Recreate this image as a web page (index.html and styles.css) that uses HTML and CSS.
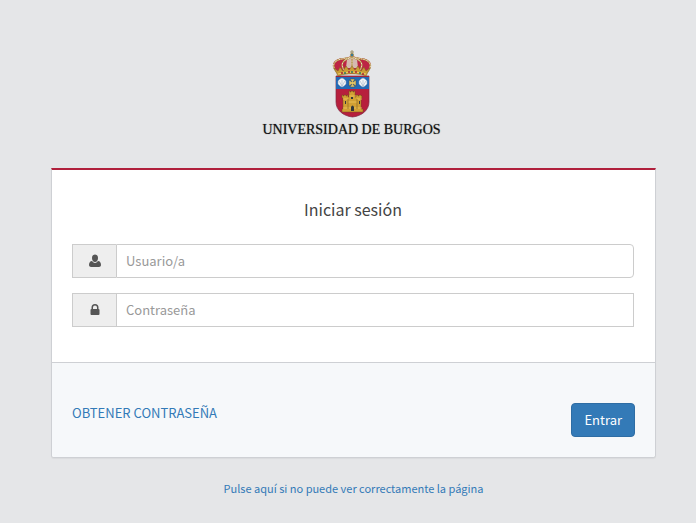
FILE: index.html
```html
<!DOCTYPE html>
<html lang="es">
<head>
<meta charset="utf-8">
<meta name="viewport" content="width=device-width, initial-scale=1">
<title>Iniciar sesión - Universidad de Burgos</title>
<link rel="stylesheet" href="styles.css">
</head>
<body>
<div class="page">
  <header class="brand">
    <svg class="crest" viewBox="0 0 40 68" aria-hidden="true">
      <!-- shield -->
      <path d="M4 26h33v26c0 8-7 14-16.500 15C11 66 4 60 4 52z" fill="#b71f3d" stroke="#7f2942" stroke-width=".7"/>
      <path d="M4 27h33v12H4z" fill="#2369b5"/>
      <!-- crown -->
      <path d="M6 24L1 17C0 11 6 8 13 8l7-2 7 2c7 0 13 3 12 9l-5 7z" fill="#bd2445"/>
      <path d="M15 9l5-2 5 2 1 9H14z" fill="#d5b9b0"/>
      <path d="M5 22C-2 15 3 10 10 9q6-1 10-2 4 1 10 2c7 1 12 6 5 13M12 20C8 14 11 10 18 8M28 20c4-6 1-10-6-12M20 8v14" fill="none" stroke="#a88436" stroke-width="1.500"/>
      <path d="M5 22C-2 15 3 10 10 9q6-1 10-2 4 1 10 2c7 1 12 6 5 13M12 20C8 14 11 10 18 8M28 20c4-6 1-10-6-12M20 8v14" fill="none" stroke="#f6ead2" stroke-width="1" stroke-dasharray="1 .6"/>
      <path d="M2 18l4 3 2-4 3 4 3-5 3 4 3-4 3 4 3-4 3 5 3-4 2 4 4-3-4 8c-9-3-19-3-28 0z" fill="#c99c35" stroke="#785923" stroke-width=".5"/>
      <path d="M6 24q14-4 28 0" fill="none" stroke="#efd06a"/>
      <path d="M9 23h2m5-1h2m5 0h2m5 2h2" stroke="#a62235" stroke-width="1.500"/>
      <path d="M12 23h2m5-1h2m6 1h2" stroke="#28745d" stroke-width="1.500"/>
      <circle cx="20" cy="5" r="1.700" fill="#387a9a" stroke="#b69242" stroke-width=".7"/>
      <path d="M20 0v4m-2-2h4" stroke="#8d8052" stroke-width=".8"/>
      <!-- shells and cross -->
      <g fill="#f2f4f6" stroke="#91a6bd" stroke-width=".5">
        <path d="M6 31l2-2 2-1 2 1 2 2v3l-2 2-2 1-2-1-2-2z"/>
        <path d="M27 31l2-2 2-1 2 1 2 2v3l-2 2-2 1-2-1-2-2z"/>
        <path d="M10 36l-3-5m3 5v-6m0 6l3-5M31 36l-3-5m3 5v-6m0 6l3-5"/>
      </g>
      <path d="M18 29h5l-2 3 3-2v6l-3-2 2 3h-5l2-3-3 2v-6l3 2z" fill="#e2c465" stroke="#354d60" stroke-width=".5"/>
      <!-- castle -->
      <path d="M10 62v-3h1V48h-1v-3h1v1h1v-1h2v1h1v-1h1v2h1v-6h1v1h1v-1h2v1h1v-1h1v6h1v-2h2v1h1v-1h2v1h1v2h-1v11h2v3z" fill="#d2a034" stroke="#71511f" stroke-width=".5"/>
      <path d="M11 49h5M25 49h5M11 58h19M17 46h7M16 52h9" stroke="#f0c85e" stroke-width=".8"/>
      <path d="M19 61v-4q1.500-3 3 0v4zM13 51h1v3h-1zM27 51h1v3h-1zM19 47h2v2h-2z" fill="#32383c"/>
      <path d="M16 49v10m9-10v10" stroke="#8e6825" stroke-width=".7"/>
    </svg>
    <div class="brand-name">UNIVERSIDAD DE BURGOS</div>
  </header>

  <main>
    <form class="card">
      <div class="card-body">
        <h1 class="title">Iniciar sesión</h1>
        <div class="field">
          <label class="addon" for="user" aria-label="Usuario/a">
            <svg class="icon" viewBox="0 0 14 14" aria-hidden="true"><path d="M7 .5a3 3.500 0 0 1 3 3.500c0 2-1 4-3 4S4 6 4 4A3 3.500 0 0 1 7 .5zM4 7c1 1 2 2 3 2s2-1 3-2c2 0 3 2 3 4 0 1-1 2-2 2H3c-1 0-2-1-2-2 0-2 1-4 3-4z"/></svg>
          </label>
          <input class="control control-rounded" id="user" type="text" placeholder="Usuario/a">
        </div>
        <div class="field">
          <label class="addon" for="pass" aria-label="Contraseña">
            <svg class="icon" viewBox="0 0 14 14" aria-hidden="true"><path fill-rule="evenodd" d="M3.500 6V4.500a3.500 3.500 0 0 1 7 0V6q1 0 1 1v4q0 1-1 1h-7q-1 0-1-1V7q0-1 1-1zM5 6h4V4.500a2 2 0 0 0-4 0z"/></svg>
          </label>
          <input class="control" id="pass" type="password" placeholder="Contraseña">
        </div>
      </div>
      <div class="card-footer">
        <a class="link" href="#">OBTENER CONTRASEÑA</a>
        <button class="submit" type="button">Entrar</button>
      </div>
    </form>
  </main>
  <a class="help link" href="#">Pulse aquí si no puede ver correctamente la página</a>
</div>
</body>
</html>
```
FILE: styles.css
```css
* {
  box-sizing: border-box;
}

body {
  margin: 0;
  background: #e5e6e8;
  color: #444;
  font-family: "Source Sans Pro", "Noto Sans CJK JP", sans-serif;
  font-size: 13px;
  line-height: 20px;
}

.page {
  display: flex;
  flex-direction: column;
  padding: 50px 40px 20px 51px;
}

.brand {
  display: flex;
  flex-direction: column;
  align-items: center;
  margin-right: 4px;
}

.crest {
  width: 40px;
  height: 68px;
}

.brand-name {
  margin: 4px 0 30px;
  color: #111;
  font-family: "Liberation Serif", serif;
  font-size: 14px;
  line-height: 16px;
  text-shadow: 0 0 1px #666;
  white-space: nowrap;
}

.card {
  border: 1px solid #ced0d4;
  border-top: 2px solid #b0203c;
  border-radius: 0 0 3px 3px;
  background: #fff;
  box-shadow: 0 1px 1px rgba(0, 0, 0, 0.05);
  overflow: hidden;
}

.card-body {
  padding: 27px 21px 35px 20px;
}

.title {
  margin: 0 0 23px;
  font-size: 16px;
  font-weight: normal;
  line-height: 24px;
  text-align: center;
}

.field {
  display: flex;
  height: 34px;
}

.field + .field {
  margin-top: 15px;
}

.addon {
  display: flex;
  align-items: center;
  justify-content: center;
  width: 44px;
  border: 1px solid #ccc;
  border-right: 0;
  background: #eee;
}

.icon {
  width: 14px;
  height: 14px;
  fill: #555;
}

.control {
  flex: 1;
  min-width: 0;
  padding: 6px 9px;
  border: 1px solid #ccc;
  border-radius: 0;
  background: #fff;
  color: #555;
  font: inherit;
}

.control-rounded {
  border-radius: 0 4px 4px 0;
}

.control::placeholder {
  color: #999;
  opacity: 1;
}

.card-footer {
  display: flex;
  align-items: flex-start;
  justify-content: space-between;
  padding: 40px 20px 20px;
  border-top: 1px solid #ced0d4;
  background: #f6f8fa;
}

.link {
  color: #337ab7;
  text-decoration: none;
}

.submit {
  height: 34px;
  padding: 0 12px;
  border: 1px solid #2e6da4;
  border-radius: 4px;
  background: #337ab7;
  color: #fff;
  font: inherit;
}

.help {
  margin-top: 20px;
  font-size: 11px;
  text-align: center;
}
```
